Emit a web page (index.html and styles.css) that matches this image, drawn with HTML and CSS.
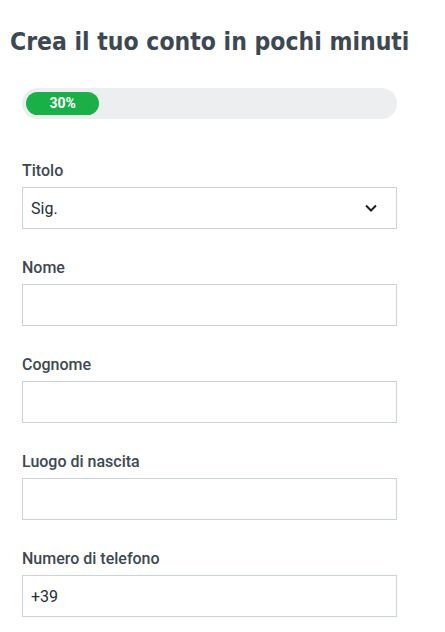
FILE: index.html
```html
<!DOCTYPE html>
<html lang="it">
<head>
  <meta charset="UTF-8" />
  <title>Registrazione</title>
  <meta name="viewport" content="width=device-width, initial-scale=1">
  <link rel="stylesheet" href="styles.css">
</head>
<body>
  <main class="signup">
    <h1 class="signup-title">Crea il tuo conto in pochi minuti</h1>

    <div class="progress">
      <div class="progress-fill" style="width: 20%">30%</div>
    </div>

    <form class="form">
      <div class="field">
        <label class="field-label" for="titolo">Titolo</label>
        <div class="select-wrap">
          <select class="field-input field-select" id="titolo">
            <option>Sig.</option>
            <option>Sig.ra</option>
          </select>
          <svg class="select-icon" width="14" height="10" viewBox="0 0 14 10" aria-hidden="true">
            <path d="M2 2.5 L7 7.5 L12 2.5" fill="none" stroke="#1b1f24" stroke-width="2"/>
          </svg>
        </div>
      </div>
      <div class="field">
        <label class="field-label" for="nome">Nome</label>
        <input class="field-input" id="nome" type="text">
      </div>
      <div class="field">
        <label class="field-label" for="cognome">Cognome</label>
        <input class="field-input" id="cognome" type="text">
      </div>
      <div class="field">
        <label class="field-label" for="luogo">Luogo di nascita</label>
        <input class="field-input" id="luogo" type="text">
      </div>
      <div class="field">
        <label class="field-label" for="telefono">Numero di telefono</label>
        <input class="field-input" id="telefono" type="tel" value="+39">
      </div>
    </form>
  </main>
</body>
</html>
```

FILE: styles.css
```css
:root {
  --ink: #3d4852;
  --ink-dark: #252c33;
  --green: #19b047;
  --track: #eceef0;
  --border: #c9d3da;
}
* { box-sizing: border-box; margin: 0; padding: 0; }
body {
  background: #fff; color: var(--ink);
  font-family: Roboto, 'DejaVu Sans', sans-serif;
}
.signup {
  padding: 26px 48px 0 10px;
}
.signup-title {
  font-family: 'DejaVu Sans Condensed', 'DejaVu Sans', sans-serif;
  font-size: 24.5px; font-weight: 700; line-height: 32px;
  color: var(--ink); white-space: nowrap;
}
.progress {
  margin: 30px 0 0 12px; height: 31px; padding: 4px;
  background: var(--track); border-radius: 16px;
}
.progress-fill {
  height: 23px; min-width: 73px; border-radius: 12px;
  background: var(--green); color: #fff;
  font-size: 14px; font-weight: 700; line-height: 23px; text-align: center;
}
.form {
  margin: 42px 0 0 12px;
  display: flex; flex-direction: column; gap: 29px;
}
.field {
  display: flex; flex-direction: column; gap: 7px;
}
.field-label {
  font-size: 16px; font-weight: 500; line-height: 19px; color: var(--ink);
}
.field-input {
  width: 100%; height: 42px; padding: 0 8px;
  border: 1px solid var(--border); border-radius: 0; background: #fff;
  font-family: inherit; font-size: 16px; color: var(--ink-dark);
  outline: none;
}
.select-wrap {
  position: relative;
}
.field-select {
  appearance: none; -webkit-appearance: none;
}
.select-icon {
  position: absolute; right: 19px; top: 16px; pointer-events: none;
}
```
